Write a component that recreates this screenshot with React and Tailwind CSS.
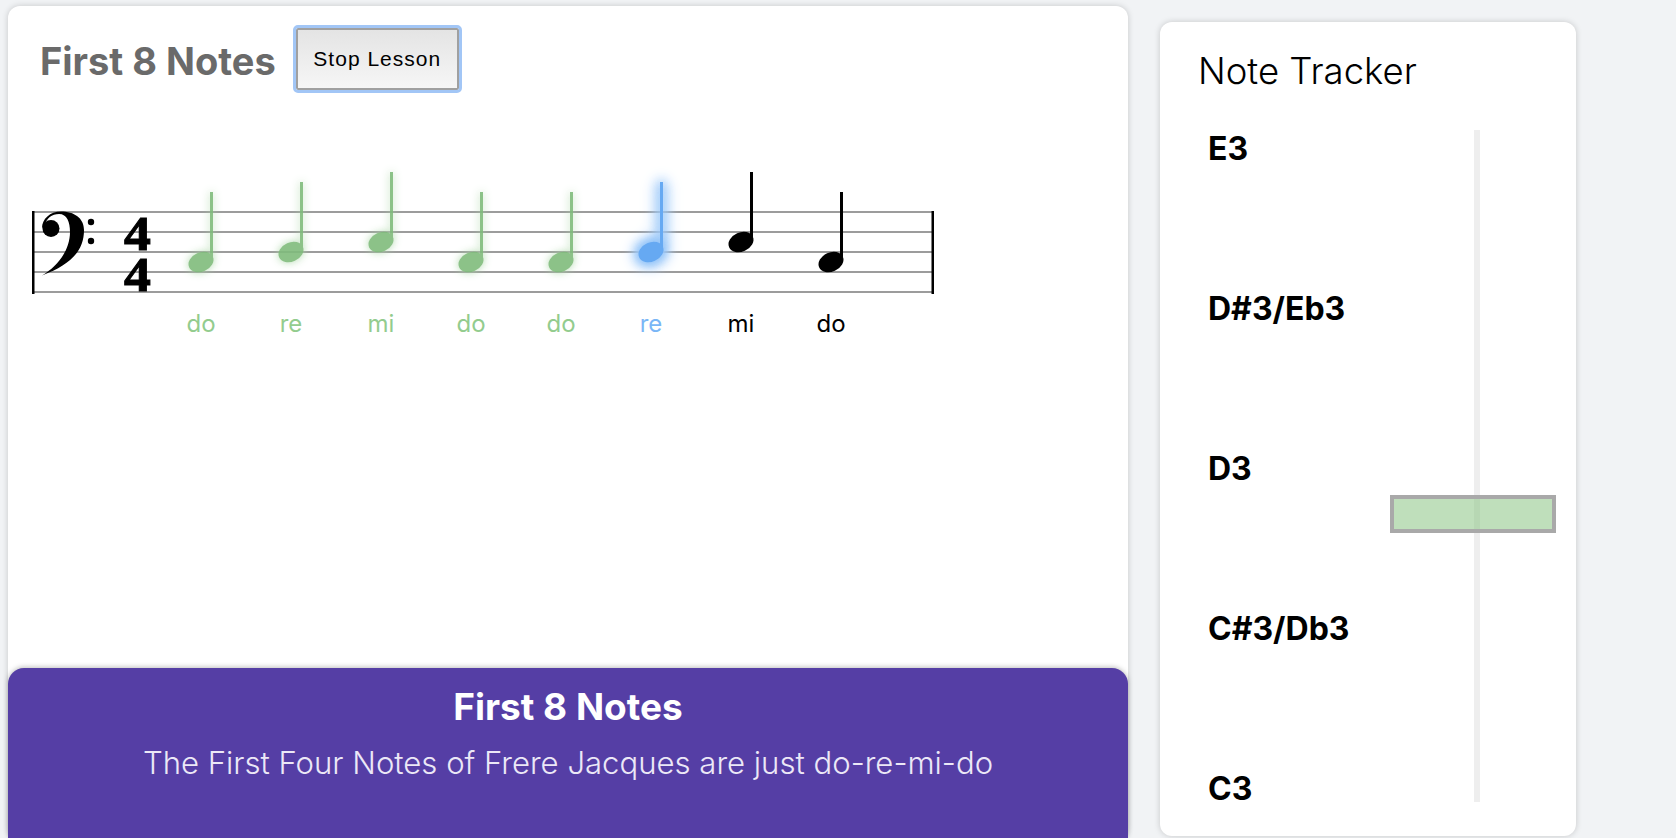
const NOTES = [
  { label: 'do', y: 262, state: 'done' },
  { label: 're', y: 252, state: 'done' },
  { label: 'mi', y: 242, state: 'done' },
  { label: 'do', y: 262, state: 'done' },
  { label: 'do', y: 262, state: 'done' },
  { label: 're', y: 252, state: 'active' },
  { label: 'mi', y: 242, state: 'todo' },
  { label: 'do', y: 262, state: 'todo' },
];

const NOTE_STYLES = {
  done: { fill: '#80bc7c', group: '[filter:drop-shadow(0_0_4px_#a9d6a5)] opacity-90', label: 'text-[#93cc8e]' },
  active: { fill: '#66a9f2', group: '[filter:drop-shadow(0_0_6px_#8fc2f8)_drop-shadow(0_0_6px_#8fc2f8)_drop-shadow(0_0_4px_#b5d6fb)]', label: 'text-[#7ab6f6]' },
  todo: { fill: '#000000', group: '', label: 'text-black' },
};

const TRACKER_LABELS = ['E3', 'D#3/Eb3', 'D3', 'C#3/Db3', 'C3'];

function Staff() {
  return (
    <svg width="960" height="180" viewBox="0 130 960 180" className="block shrink-0">
      {[212, 232, 252, 272, 292].map((y) => (
        <rect key={y} x="33" y={y - 1} width="899" height="2" fill="#9c9c9c" />
      ))}
      <rect x="32" y="211" width="2.500" height="83" fill="#000" />
      <rect x="931.500" y="211" width="2.500" height="83" fill="#000" />

      {/* bass clef */}
      <circle cx="51" cy="228.500" r="8.500" fill="#000" />
      <path
        d="M42 275.500 C72 264 84 250 84 230 C84 218 74 211.500 61 211.500 C50 211.500 42 219 42 228 L45 226 C46 218 52 214 59 214 C67 214 70 222 70 232 C70 250 58 266 42 275.500 Z"
        fill="#000"
      />
      <circle cx="91" cy="222" r="3.200" fill="#000" />
      <circle cx="91" cy="241" r="3.200" fill="#000" />

      <text transform="translate(137.500 250) scale(1.12 1)" textAnchor="middle" fontFamily="'Liberation Serif', serif" fontWeight="700" fontSize="48" stroke="#000" strokeWidth="1">4</text>
      <text transform="translate(137.500 291) scale(1.12 1)" textAnchor="middle" fontFamily="'Liberation Serif', serif" fontWeight="700" fontSize="48" stroke="#000" strokeWidth="1">4</text>

      {NOTES.map((note, i) => {
        const cx = 201 + i * 90;
        const style = NOTE_STYLES[note.state];
        return (
          <g key={i} className={style.group}>
            <rect x={cx + 9} y={note.y - 70} width="3" height="68" fill={style.fill} />
            <ellipse cx={cx} cy={note.y} rx="13" ry="9.500" transform={`rotate(-24 ${cx} ${note.y})`} fill={style.fill} />
          </g>
        );
      })}
    </svg>
  );
}

export default function App() {
  return (
    <div className="flex h-[838px] w-[1676px] items-start gap-[32px] overflow-hidden bg-[#f1f3f5] pl-2 font-['Inter',sans-serif]">
      {/* Lesson card */}
      <div className="mt-1.5 flex h-[832px] w-[1120px] shrink-0 flex-col rounded-xl bg-white shadow-[0_0_6px_rgba(0,0,0,0.18)]">
        <div className="flex items-start gap-[20px] pl-[32px] pt-[22px]">
          <h1 className="mt-[3px] text-[38px] font-bold leading-[61px] text-[#6a6a6a]">First 8 Notes</h1>
          <button className="h-[62px] w-[163px] rounded-[2px] border-2 border-[#a0a0a0] bg-gradient-to-b from-[#e4e4e4] to-[#f6f6f6] font-['Liberation_Sans',sans-serif] text-[21px] tracking-[1px] text-black outline-[3px] outline-[#a2c6f6]">
            Stop Lesson
          </button>
        </div>

        <div className="-ml-2 mt-[38px]">
          <Staff />
          <div className="flex pl-[156px]">
            {NOTES.map((note, i) => (
              <span key={i} className={`w-[90px] text-center text-[24px] font-normal leading-[28px] ${NOTE_STYLES[note.state].label}`}>
                {note.label}
              </span>
            ))}
          </div>
        </div>

        <div className="mt-auto h-[170px] rounded-t-2xl bg-[#553ea5] pt-[16px] text-center shadow-[0_-1px_5px_rgba(0,0,0,0.25)]">
          <h2 className="text-[37px] font-bold leading-[46px] text-white">First 8 Notes</h2>
          <p className="mt-[13px] text-[31.100px] font-light leading-[40px] text-[#ece8f7]">
            The First Four Notes of Frere Jacques are just do-re-mi-do
          </p>
        </div>
      </div>

      {/* Note tracker */}
      <div className="mt-[22px] flex h-[814px] w-[416px] shrink-0 flex-col rounded-xl bg-white pl-[38px] shadow-[0_0_6px_rgba(0,0,0,0.18)]">
        <h2 className="pt-[24px] text-[36.500px] font-light leading-[50px] text-black">Note Tracker</h2>
        <div className="relative ml-[10px] mt-[34px] flex h-[672px] flex-col gap-[122px]">
          {TRACKER_LABELS.map((name) => (
            <span key={name} className="text-[32px] font-bold leading-[38px] text-black">{name}</span>
          ))}
          <div className="absolute bottom-0 left-[266px] top-0 w-1.5 bg-[#eeeeee]" />
          <div className="absolute left-[182px] top-[365px] h-[38px] w-[166px] border-4 border-[#a9a9a9] bg-[#8ac484]/55" />
        </div>
      </div>
    </div>
  );
}
